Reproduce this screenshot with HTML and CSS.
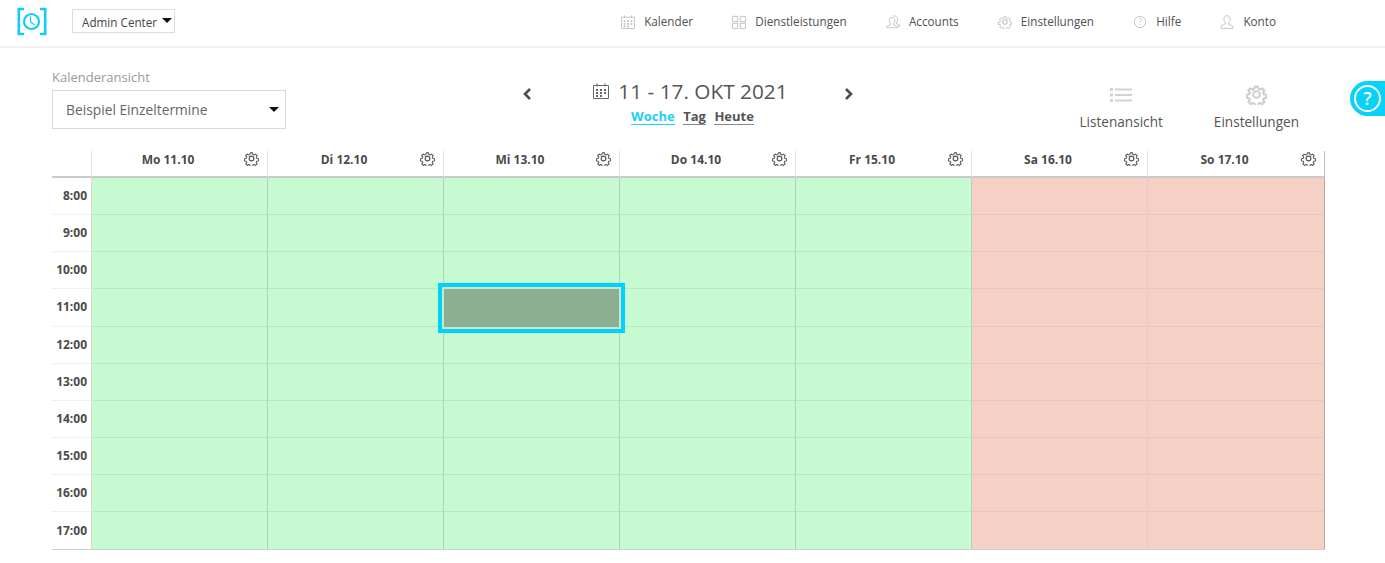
FILE: index.html
```html
<!DOCTYPE html>
<html lang="de">
<head>
<meta charset="utf-8">
<title>Kalender</title>
<link rel="stylesheet" href="styles.css">
</head>
<body>
<svg width="0" height="0" class="defs">
  <defs>
    <symbol id="gear" viewBox="0 0 24 24">
      <path fill="none" stroke="currentColor" stroke-width="1.8" stroke-linejoin="round" d="M10 2h4l.6 3 2.100.9 2.600-1.700 2.800 2.800-1.700 2.600.9 2.100 3 .6v4l-3 .6-.9 2.100 1.700 2.600-2.800 2.800-2.600-1.700-2.100.9-.6 3h-4l-.6-3-2.100-.9-2.600 1.700-2.800-2.800 1.700-2.600-.9-2.100-3-.6v-4l3-.6.9-2.100L1.500 7l2.800-2.800 2.600 1.700L9 5z" transform="translate(1.200 1.200) scale(.9)"/>
      <circle cx="12" cy="12" r="3.800" fill="none" stroke="currentColor" stroke-width="1.800"/>
    </symbol>
    <symbol id="gear-bold" viewBox="0 0 24 24">
      <path fill="none" stroke="currentColor" stroke-width="2.800" stroke-linejoin="round" d="M10 2h4l.6 3 2.100.9 2.600-1.700 2.800 2.800-1.700 2.600.9 2.100 3 .6v4l-3 .6-.9 2.100 1.700 2.600-2.800 2.800-2.600-1.700-2.100.9-.6 3h-4l-.6-3-2.100-.9-2.600 1.700-2.800-2.800 1.700-2.600-.9-2.100-3-.6v-4l3-.6.9-2.100L1.500 7l2.800-2.800 2.600 1.700L9 5z" transform="translate(1.200 1.200) scale(.9)"/>
      <circle cx="12" cy="12" r="3.800" fill="none" stroke="currentColor" stroke-width="2.400"/>
    </symbol>
    <symbol id="cal" viewBox="0 0 16 16">
      <path fill="none" stroke="currentColor" d="M.5 2.500h15v13H.5zM4 .5v3M12 .5v3"/>
      <path fill="currentColor" d="M3 6h2v2H3zM7 6h2v2H7zM11 6h2v2h-2zM3 9h2v2H3zM7 9h2v2H7zM11 9h2v2h-2zM3 12h2v2H3zM7 12h2v2H7z"/>
    </symbol>
    <symbol id="person" viewBox="0 0 16 16">
      <path fill="none" stroke="currentColor" d="M8 .8c2.300 0 3.600 1.800 3.600 4 0 1.800-.8 3.300-1.800 4.200v1.500l5 2.500v2.200H1.200V12.500l5-2.500V9C5.200 8.100 4.400 6.600 4.400 4.800c0-2.200 1.300-4 3.600-4z"/>
    </symbol>
  </defs>
</svg>

<header class="topbar">
  <a class="logo" aria-label="Logo">
    <svg width="30" height="29" viewBox="0 0 30 29">
      <path fill="none" stroke="#14cdf6" stroke-width="2.600" d="M7 2H1.800v25H7M23 2h5.200v25H23"/>
      <circle cx="14.500" cy="14.500" r="7.500" fill="none" stroke="#14cdf6" stroke-width="2.200"/>
      <path fill="none" stroke="#14cdf6" stroke-width="1.300" d="M13.500 9.500V15l4 3"/>
    </svg>
  </a>
  <button class="admin">Admin Center<span class="caret"></span></button>
  <nav class="nav">
    <a class="nav-item"><svg class="nav-icon"><use href="#cal"/></svg>Kalender</a>
    <a class="nav-item"><svg class="nav-icon" viewBox="0 0 16 16"><path fill="none" stroke="currentColor" d="M.5 1.500h6v6h-6zM9.500 1.500h6v6h-6zM.5 9.500h6v6h-6zM9.500 9.500h6v6h-6z"/></svg>Dienstleistungen</a>
    <a class="nav-item"><svg class="nav-icon" viewBox="0 0 16 16"><path fill="none" stroke="currentColor" d="M7 2.800c2 0 3.200 1.500 3.200 3.400 0 1.500-.7 2.800-1.500 3.500v1.300l4.300 2v1.500H1v-1.500l4.300-2V9.700c-.8-.7-1.500-2-1.500-3.500 0-1.900 1.200-3.400 3.200-3.400zM8 1c2.800-.6 5.200 1 5.200 3.800 0 1.500-.6 2.800-1.400 3.600v1.300l3.700 1.800v1.500h-2"/></svg>Accounts</a>
    <a class="nav-item"><svg class="nav-icon"><use href="#gear"/></svg>Einstellungen</a>
    <a class="nav-item"><svg class="nav-icon" viewBox="0 0 16 16"><circle cx="8" cy="8" r="6.500" fill="none" stroke="currentColor"/><text x="8" y="11.500" text-anchor="middle" font-size="9.500" fill="currentColor" font-family="Open Sans">?</text></svg>Hilfe</a>
    <a class="nav-item"><svg class="nav-icon"><use href="#person"/></svg>Konto</a>
  </nav>
</header>

<a class="help-tab" aria-label="Hilfe"><span class="help-ring">?</span></a>

<main class="page">
  <section class="toolbar">
    <div class="view-select">
      <label class="view-label">Kalenderansicht</label>
      <div class="select">Beispiel Einzeltermine<span class="caret"></span></div>
    </div>
    <div class="date-nav">
      <svg class="arrow" viewBox="0 0 10 12"><path fill="none" stroke="#4d4d4d" stroke-width="2.600" d="M8 1L3 6l5 5"/></svg>
      <div class="date-center">
        <div class="date-title"><svg class="date-icon"><use href="#cal"/></svg>11 - 17. OKT 2021</div>
        <div class="date-links"><a class="link active">Woche</a><a class="link">Tag</a><a class="link">Heute</a></div>
      </div>
      <svg class="arrow" viewBox="0 0 10 12"><path fill="none" stroke="#4d4d4d" stroke-width="2.600" d="M2 1l5 5-5 5"/></svg>
    </div>
    <div class="actions">
      <a class="action">
        <svg class="action-icon" viewBox="0 0 22 22"><path fill="#d2d2d2" d="M0 4h3v3H0zM5 4.500h17v2H5zM0 9.500h3v3H0zM5 10h17v2H5zM0 15h3v3H0zM5 15.500h17v2H5z"/></svg>
        Listenansicht
      </a>
      <a class="action">
        <svg class="action-icon gear-big"><use href="#gear-bold"/></svg>
        Einstellungen
      </a>
    </div>
  </section>

  <section class="calendar">
    <div class="head-row">
      <div class="corner"></div>
      <div class="day-head"><b>Mo 11.10</b><svg class="day-gear"><use href="#gear"/></svg></div>
      <div class="day-head"><b>Di 12.10</b><svg class="day-gear"><use href="#gear"/></svg></div>
      <div class="day-head"><b>Mi 13.10</b><svg class="day-gear"><use href="#gear"/></svg></div>
      <div class="day-head"><b>Do 14.10</b><svg class="day-gear"><use href="#gear"/></svg></div>
      <div class="day-head"><b>Fr 15.10</b><svg class="day-gear"><use href="#gear"/></svg></div>
      <div class="day-head"><b>Sa 16.10</b><svg class="day-gear"><use href="#gear"/></svg></div>
      <div class="day-head"><b>So 17.10</b><svg class="day-gear"><use href="#gear"/></svg></div>
    </div>
    <div class="grid" id="grid">
      <div class="time">8:00</div><div class="cell g"></div><div class="cell g"></div><div class="cell g"></div><div class="cell g"></div><div class="cell g"></div><div class="cell r"></div><div class="cell r"></div>
      <div class="time">9:00</div><div class="cell g"></div><div class="cell g"></div><div class="cell g"></div><div class="cell g"></div><div class="cell g"></div><div class="cell r"></div><div class="cell r"></div>
      <div class="time">10:00</div><div class="cell g"></div><div class="cell g"></div><div class="cell g"></div><div class="cell g"></div><div class="cell g"></div><div class="cell r"></div><div class="cell r"></div>
      <div class="time">11:00</div><div class="cell g"></div><div class="cell g"></div><div class="cell g selected"><div class="event"></div></div><div class="cell g"></div><div class="cell g"></div><div class="cell r"></div><div class="cell r"></div>
      <div class="time">12:00</div><div class="cell g"></div><div class="cell g"></div><div class="cell g"></div><div class="cell g"></div><div class="cell g"></div><div class="cell r"></div><div class="cell r"></div>
      <div class="time">13:00</div><div class="cell g"></div><div class="cell g"></div><div class="cell g"></div><div class="cell g"></div><div class="cell g"></div><div class="cell r"></div><div class="cell r"></div>
      <div class="time">14:00</div><div class="cell g"></div><div class="cell g"></div><div class="cell g"></div><div class="cell g"></div><div class="cell g"></div><div class="cell r"></div><div class="cell r"></div>
      <div class="time">15:00</div><div class="cell g"></div><div class="cell g"></div><div class="cell g"></div><div class="cell g"></div><div class="cell g"></div><div class="cell r"></div><div class="cell r"></div>
      <div class="time">16:00</div><div class="cell g"></div><div class="cell g"></div><div class="cell g"></div><div class="cell g"></div><div class="cell g"></div><div class="cell r"></div><div class="cell r"></div>
      <div class="time">17:00</div><div class="cell g"></div><div class="cell g"></div><div class="cell g"></div><div class="cell g"></div><div class="cell g"></div><div class="cell r"></div><div class="cell r"></div>
    </div>
  </section>
</main>
</body>
</html>
```

FILE: styles.css
```css
* { box-sizing: border-box; }
html, body { margin: 0; padding: 0; height: 100%; overflow: hidden; }
body { position: relative; background: #fff; color: #4a4a4a; font-family: "Open Sans", sans-serif; font-size: 12px; }
.defs { position: absolute; }

.topbar { height: 48px; display: flex; align-items: flex-start; padding-left: 17px; border-bottom: 2px solid #f0f0f0; }
.logo { display: block; width: 30px; height: 29px; margin-top: 7px; }
.admin { margin: 9px 0 0 25px; width: 103px; height: 24px; padding: 2px 0 0 9px; display: flex; align-items: center; background: #fff; border: 1px solid #dcdcdc; color: #444; font: 11.700px "Open Sans", sans-serif; white-space: nowrap; }
.caret { display: block; width: 0; height: 0; border-left: 5px solid transparent; border-right: 5px solid transparent; border-top: 5px solid #111; }
.admin .caret { margin: -3px 0 0 5px; }
.nav { margin-left: auto; padding-right: 109px; display: flex; gap: 39.200px; height: 42px; }
.nav-item { display: flex; align-items: center; color: #4f4f4f; font-size: 11.700px; white-space: nowrap; }
.nav-icon { width: 14px; height: 14px; margin: 1px 9px 0 0; color: #bdbdbd; overflow: visible; }

.help-tab { position: absolute; right: 0; top: 81px; width: 35px; height: 35px; background: #06d3fa; border-radius: 18px 0 0 18px; display: flex; align-items: center; padding-left: 4px; }
.help-ring { width: 27px; height: 27px; border: 2.500px solid #fff; border-radius: 50%; color: #fff; font-size: 18px; font-weight: 600; line-height: 22px; text-align: center; }

.page { padding: 0 60px 0 52px; }
.toolbar { height: 103px; display: flex; align-items: flex-start; }
.view-select { width: 234px; padding-top: 20px; }
.view-label { display: block; color: #9a9a9a; font-size: 13px; line-height: 18px; }
.select { margin-top: 4px; height: 39px; padding: 0 6px 0 13px; display: flex; align-items: center; justify-content: space-between; border: 1px solid #d9d9d9; color: #666; font-size: 13.800px; }
.date-nav { display: flex; align-items: flex-start; margin-left: 236px; padding-top: 40px; }
.arrow { width: 10px; height: 12px; }
.date-center { width: 312px; padding-left: 9px; margin-top: -12px; display: flex; flex-direction: column; align-items: center; }
.date-title { display: flex; align-items: center; padding-right: 4px; font-size: 20.800px; line-height: 30px; color: #555; white-space: nowrap; }
.date-icon { width: 16px; height: 16px; margin-right: 9px; color: #666; }
.date-links { display: flex; gap: 8.500px; margin-top: 3px; font-size: 13px; font-weight: 700; line-height: 17px; }
.link { color: #555; border-bottom: 1px solid #888; line-height: 15px; }
.link.active { color: #19d0f8; border-bottom-color: #19d0f8; }
.actions { margin-left: auto; margin-right: 26px; display: flex; gap: 51px; padding-top: 36px; }
.action { display: flex; flex-direction: column; align-items: center; gap: 7px; font-size: 13.600px; line-height: 18px; color: #555; }
.action-icon { width: 22px; height: 22px; }
.gear-big { width: 21px; height: 21px; margin-bottom: 1px; color: #cfcfcf; }

.calendar { width: 1273px; position: relative; }
.head-row { display: grid; grid-template-columns: 40px repeat(6, 176px) 177px; border-bottom: 2px solid #c9c9c9; box-sizing: content-box; height: 25px; }
.corner { border-right: 1px solid #e2e2e2; }
.day-head { position: relative; display: flex; align-items: center; justify-content: center; padding: 0 23px 9px 0; border-right: 1px solid #e2e2e2; font-size: 12px; color: #4a4a4a; }
.day-head:last-child { border-right: 1px solid #c0c0c0; }
.day-gear { position: absolute; right: 8px; top: 0; width: 15px; height: 15px; color: #555; }
.grid { display: grid; grid-template-columns: 40px repeat(6, 176px) 177px; grid-auto-rows: 37.150px; border-bottom: 1px solid #cfcfcf; }
.time { display: flex; align-items: center; justify-content: flex-end; padding: 0 4px 1px 0; border-right: 1px solid #d6d6d6; border-bottom: 1px solid #f0f0f0; font-size: 12px; font-weight: 700; color: #4a4a4a; }
.time:nth-last-child(8) { border-bottom: 0; }
.cell { position: relative; border-right: 1px solid rgba(170,170,170,.55); border-bottom: 1px solid rgba(0,0,0,.07); }
.cell:nth-last-child(-n+7) { border-bottom: 0; }
.cell.g { background: #c6fad0; }
.cell.r { background: #f4d1c4; border-right-color: rgba(190,190,190,.35); border-bottom-color: rgba(0,0,0,.05); }
.cell.r:nth-child(8n) { border-right-color: rgba(0,0,0,.2); }
.selected { z-index: 1; }
.event { position: absolute; left: -6px; top: -6px; width: 187px; height: 50px; background: #8cae91; border: 4px solid #00d2fb; box-shadow: inset 0 0 0 2px #cbe6ce; }
```
